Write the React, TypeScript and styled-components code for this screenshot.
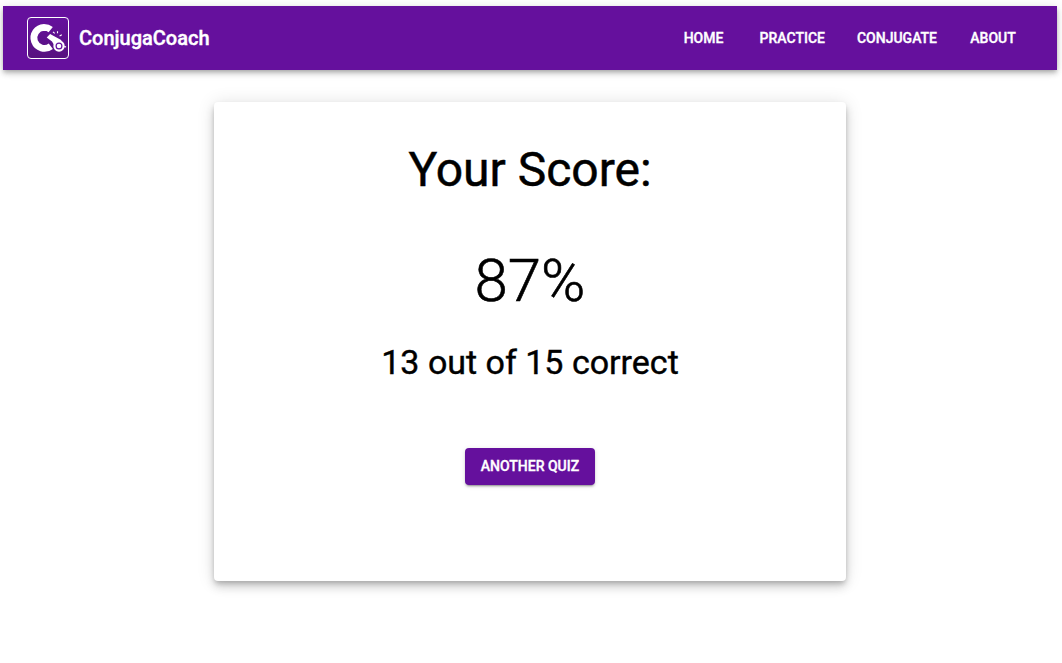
import React from "react";
import styled, { createGlobalStyle } from "styled-components";

const Global = createGlobalStyle`
  *, *::before, *::after { box-sizing: border-box; }
  body { margin: 0; background: #fff; color: #000; font-family: Roboto, "Liberation Sans", sans-serif; }
`;
const Page = styled.div`
  min-height: 100vh;
  padding: 6px 5px 0 3px;
`;
const Bar = styled.header`
  display: flex;
  align-items: center;
  height: 64px;
  padding: 0 32px 0 24px;
  background: #65109d;
  color: #fff;
  box-shadow: 0 2px 4px -1px rgba(0,0,0,.2), 0 4px 5px rgba(0,0,0,.14), 0 1px 10px rgba(0,0,0,.12);
`;
const Logo = styled.svg`
  display: block;
  width: 42px;
  height: 42px;
`;
const Brand = styled.div`
  margin-left: 10px;
  font-size: 20px;
  font-weight: 500;
  line-height: 32px;
  -webkit-text-stroke: 0.4px currentColor;
`;
const Nav = styled.nav`
  display: flex;
  gap: 16px;
  margin-left: auto;
`;
const NavLink = styled.a`
  min-width: 64px;
  padding: 6px 8px;
  text-align: center;
  font-size: 14px;
  font-weight: 500;
  line-height: 24.5px;
  -webkit-text-stroke: 0.35px currentColor;
`;
const Card = styled.main`
  display: flex;
  flex-direction: column;
  align-items: center;
  width: 632px;
  height: 479px;
  margin: 32px auto 0;
  padding-top: 40px;
  border-radius: 4px;
  background: #fff;
  box-shadow: 0 3px 5px -1px rgba(0,0,0,.2), 0 6px 10px rgba(0,0,0,.14), 0 1px 18px rgba(0,0,0,.12);
`;
const Title = styled.h1`
  margin: 0;
  font-size: 48px;
  font-weight: 400;
  line-height: 56px;
  -webkit-text-stroke: 0.5px currentColor;
`;
const Percent = styled.div`
  margin-top: 47px;
  font-size: 60px;
  font-weight: 300;
  line-height: 72px;
  -webkit-text-stroke: 0.6px currentColor;
`;
const Detail = styled.div`
  margin-top: 24px;
  font-size: 34px;
  font-weight: 400;
  line-height: 42px;
  -webkit-text-stroke: 0.4px currentColor;
`;
const Button = styled.button`
  width: 130px;
  height: 37px;
  margin-top: 65px;
  padding: 0 0 1px;
  border: 0;
  border-radius: 4px;
  background: #65109d;
  color: #fff;
  font: 500 14px/24px Roboto, sans-serif;
  -webkit-text-stroke: 0.35px currentColor;
  box-shadow: 0 3px 1px -2px rgba(0,0,0,.2), 0 2px 2px rgba(0,0,0,.14), 0 1px 5px rgba(0,0,0,.12);
`;

export default function App() {
  return (
    <Page>
      <Global />
      <Bar>
        <Logo viewBox="0 0 42 42" fill="none" stroke="#fff">
          <defs>
            <linearGradient id="tile" x1="0" y1="0" x2="0" y2="1">
              <stop offset="0" stopColor="#65109d" />
              <stop offset="1" stopColor="#57127f" />
            </linearGradient>
          </defs>
          <rect x=".5" y=".5" width="41" height="41" rx="3.5" fill="url(#tile)" />
          <path d="M23.7 12.6C21.7 11 19.5 10.4 17 10.4a10.5 10.5 0 1 0 6.8 18.8" strokeWidth="6.8" />
          <path d="M19.7 20.4l3.4-3.3 11.5 6.2-6.2 7-3.4-5.7z" fill="#fff" stroke="none" />
          <circle cx="32" cy="29" r="5.7" fill="#fff" stroke="none" />
          <circle cx="32" cy="29" r="2.9" stroke="#65109d" strokeWidth="1.2" />
          <path d="M37.2 29.6l1.9.3" strokeWidth="1.2" />
          <path d="M26 14.8l1.7 1.5M30.5 14.2v2M34.8 17.7l-2.2 1.3" strokeWidth="1.1" />
        </Logo>
        <Brand>ConjugaCoach</Brand>
        <Nav>
          {["HOME", "PRACTICE", "CONJUGATE", "ABOUT"].map((label) => (
            <NavLink key={label}>{label}</NavLink>
          ))}
        </Nav>
      </Bar>
      <Card>
        <Title>Your Score:</Title>
        <Percent>87%</Percent>
        <Detail>13 out of 15 correct</Detail>
        <Button>ANOTHER QUIZ</Button>
      </Card>
    </Page>
  );
}
